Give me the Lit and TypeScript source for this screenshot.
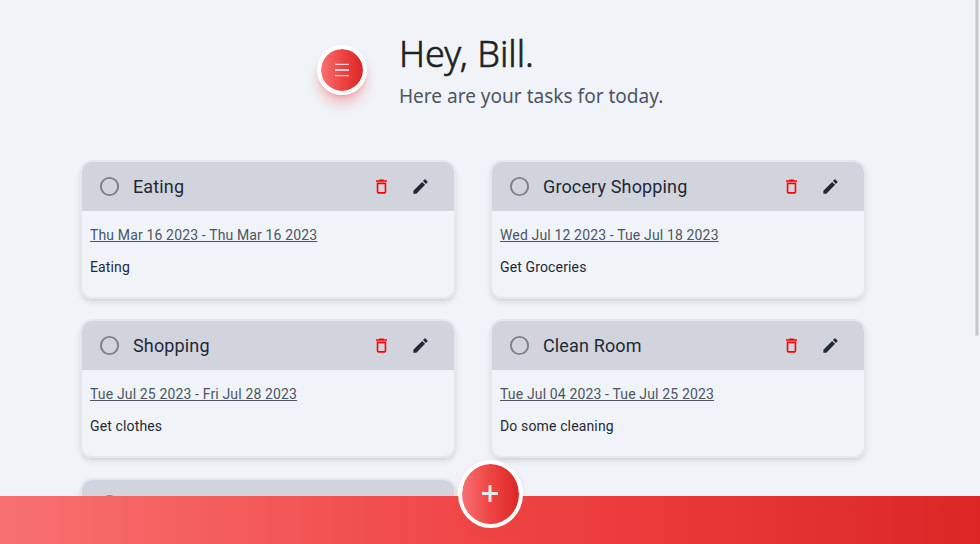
import { LitElement, html, css } from "lit";
import { customElement, property } from "lit/decorators.js";

@customElement("task-card")
class TaskCard extends LitElement {
  @property() name = "";
  @property() dates = "";
  @property() note = "";

  static styles = css`
    :host {
      display: block;
      box-sizing: border-box;
      height: 139px;
      border: 2px solid #e5e7eb;
      border-radius: 12px;
      overflow: hidden;
      box-shadow: 0 4px 6px -1px rgba(0, 0, 0, 0.1), 0 2px 4px -2px rgba(0, 0, 0, 0.1);
      color: #1f2937;
      font-family: Roboto, sans-serif;
    }
    .head {
      display: flex;
      align-items: center;
      height: 49px;
      box-sizing: border-box;
      padding: 0 24px 0 16px;
      background: #d1d4dc;
    }
    .circle { width: 23px; height: 23px; fill: #808080; }
    .name { flex: 1; margin-left: 12px; font-size: 18px; line-height: 28px; letter-spacing: 0.14px; }
    .trash { width: 19px; height: 19px; fill: #f00; margin-right: 20px; }
    .edit { width: 19px; height: 19px; fill: #1f2937; }
    .body { padding: 14px 8px; font-size: 14px; line-height: 20px; }
    .dates { color: #4b5563; text-decoration: underline; letter-spacing: 0.145px; }
    .note { margin-top: 12px; letter-spacing: 0.14px; }
  `;

  render() {
    return html`
      <div class="head">
        <svg class="circle" viewBox="0 0 24 24"><path d="M12 2a10 10 0 1 0 0 20 10 10 0 0 0 0-20zm0 18a8 8 0 1 1 0-16 8 8 0 0 1 0 16z"/></svg>
        <span class="name">${this.name}</span>
        <svg class="trash" viewBox="0 0 24 24"><path d="M6 19c0 1.100.9 2 2 2h8c1.100 0 2-.9 2-2V7H6v12zM8 9h8v10H8V9zm7.500-5l-1-1h-5l-1 1H5v2h14V4z"/></svg>
        <svg class="edit" viewBox="0 0 24 24"><path d="M3 17.250V21h3.750L17.810 9.940l-3.750-3.750L3 17.250zM20.710 7.040a1 1 0 0 0 0-1.410l-2.340-2.340a1 1 0 0 0-1.410 0l-1.830 1.830 3.750 3.750 1.830-1.830z"/></svg>
      </div>
      <div class="body">
        <div class="dates">${this.dates}</div>
        <div class="note">${this.note}</div>
      </div>`;
  }
}

const tasks = [
  ["Eating", "Thu Mar 16 2023 - Thu Mar 16 2023", "Eating"],
  ["Grocery Shopping", "Wed Jul 12 2023 - Tue Jul 18 2023", "Get Groceries"],
  ["Shopping", "Tue Jul 25 2023 - Fri Jul 28 2023", "Get clothes"],
  ["Clean Room", "Tue Jul 04 2023 - Tue Jul 25 2023", "Do some cleaning"],
  ["", "", ""],
];

@customElement("app-root")
class AppRoot extends LitElement {
  static styles = css`
    :host {
      display: block;
      position: relative;
      height: 544px;
      overflow: hidden;
      background: #f0f4f9;
    }
    header {
      display: flex;
      align-items: flex-start;
      height: 160px;
      box-sizing: border-box;
      padding: 31px 0 0 317px;
    }
    .round {
      display: flex;
      align-items: center;
      justify-content: center;
      box-sizing: border-box;
      border: 4px solid #fff;
      border-radius: 50%;
      background: linear-gradient(to right, #f87171, #ef4444, #dc2626) padding-box;
    }
    .menu {
      width: 50px;
      height: 50px;
      margin: 14px 32px 0 0;
      box-shadow: 0 10px 15px -3px rgba(239, 68, 68, 0.4), 0 4px 6px -4px rgba(239, 68, 68, 0.4);
    }
    .menu svg { width: 14px; height: 14px; }
    h1, p { margin: 0; font-family: "Noto Sans", sans-serif; white-space: nowrap; }
    h1 { font-size: 36px; line-height: 46px; font-weight: 300; color: #212121; -webkit-text-stroke: 0.6px #212121; }
    p {
      font-size: 20px;
      line-height: 28px;
      margin-top: 5px;
      color: #4b5563;
      transform: scaleX(0.952);
      transform-origin: left;
    }
    .grid {
      display: grid;
      grid-template-columns: 376px 376px;
      column-gap: 34px;
      row-gap: 20px;
      padding-left: 80px;
    }
    .bar {
      position: absolute;
      left: 0;
      right: 0;
      bottom: 0;
      height: 48px;
      background: linear-gradient(to right, #f87171, #ef4444, #dc2626);
    }
    .add {
      position: absolute;
      left: 458px;
      top: -36px;
      width: 65px;
      height: 68px;
      box-shadow: 0 4px 8px rgba(239, 68, 68, 0.15);
    }
    .add svg { width: 16px; height: 17px; margin: 0 1px 2px 0; }
    .scroll {
      position: absolute;
      right: 1px;
      top: 0;
      width: 2px;
      height: 335px;
      background: #c8c8c8;
      border: solid #dcdddf;
      border-width: 0 1px 1px;
    }
  `;

  render() {
    return html`
      <header>
        <div class="round menu">
          <svg viewBox="0 0 14 14" fill="#fff" fill-opacity=".75"><path d="M0 .8h14v1.300H0zM0 6h14v2H0zM0 11.900h14v1.300H0z"/></svg>
        </div>
        <div>
          <h1>Hey, Bill.</h1>
          <p>Here are your tasks for today.</p>
        </div>
      </header>
      <div class="grid">
        ${tasks.map(([n, d, t]) => html`<task-card .name=${n} .dates=${d} .note=${t}></task-card>`)}
      </div>
      <div class="bar">
        <div class="round add">
          <svg viewBox="0 0 16 17" fill="#e5e7eb"><path d="M6.500 0h3v7h6.500v3H9.500v7h-3v-7H0V7h6.500z"/></svg>
        </div>
      </div>
      <div class="scroll"></div>`;
  }
}
